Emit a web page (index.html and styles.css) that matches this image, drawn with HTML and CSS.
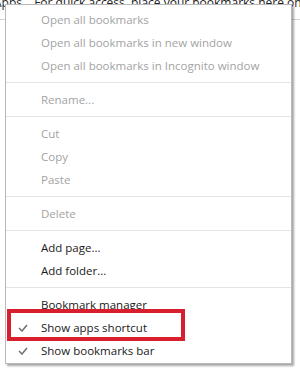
FILE: index.html
```html
<!DOCTYPE html>
<html lang="en">
<head>
    <meta charset="UTF-8">
    <meta name="viewport" content="width=device-width, initial-scale=1.0">
    <title>Bookmarks bar menu</title>
    <link rel="stylesheet" href="styles.css">
</head>
<body>
    <div class="bookmarks-bar">
        <span class="apps">Apps</span>
        <span class="hint">For quick access, place your bookmarks here on the bookmarks bar.</span>
    </div>
    <div class="context-menu">
        <div class="item disabled">Open all bookmarks</div>
        <div class="item disabled">Open all bookmarks in new window</div>
        <div class="item disabled">Open all bookmarks in Incognito window</div>
        <div class="separator"></div>
        <div class="item disabled">Rename...</div>
        <div class="separator"></div>
        <div class="item disabled">Cut</div>
        <div class="item disabled">Copy</div>
        <div class="item disabled">Paste</div>
        <div class="separator"></div>
        <div class="item disabled">Delete</div>
        <div class="separator"></div>
        <div class="item">Add page...</div>
        <div class="item">Add folder...</div>
        <div class="separator"></div>
        <div class="item">Bookmark manager</div>
        <div class="item checked highlight">
            <svg class="check" width="10" height="8" viewBox="0 0 10 8"><polyline points="1,4 4,7 9,1" fill="none" stroke="#707070" stroke-width="1.5"/></svg>
            Show apps shortcut
        </div>
        <div class="item checked">
            <svg class="check" width="10" height="8" viewBox="0 0 10 8"><polyline points="1,4 4,7 9,1" fill="none" stroke="#707070" stroke-width="1.5"/></svg>
            Show bookmarks bar
        </div>
    </div>
</body>
</html>
```

FILE: styles.css
```css
body {
    margin: 0;
    background: #fff;
    font-family: "Open Sans", "Noto Sans", Arial, sans-serif;
    font-size: 12px;
    overflow: hidden;
}
.bookmarks-bar {
    height: 14px;
    margin-top: -4px;
    padding-bottom: 9px;
    line-height: 14px;
    border-bottom: 1px solid #d4d4d4;
    color: #222;
    white-space: nowrap;
    overflow: hidden;
}
.apps {
    margin-left: -6px;
}
.hint {
    margin-left: 9px;
}
.context-menu {
    position: absolute;
    left: 5px;
    top: 4px;
    width: 285px;
    padding: 3px 0 1px;
    background: #fff;
    border: 1px solid #b9b9b9;
    box-shadow: 2px 2px 2px rgba(0, 0, 0, 0.35);
}
.item {
    position: relative;
    display: flex;
    align-items: center;
    height: 23px;
    padding-left: 35px;
    font-size: 11.5px;
    color: #1a1a1a;
    white-space: nowrap;
}
.item.disabled {
    color: #a3a3a3;
}
.item.checked .check {
    position: absolute;
    left: 12px;
    top: 8px;
}
.separator {
    height: 1px;
    margin: 5px 0;
    background: #e4e4e4;
}
.highlight::after {
    content: "";
    position: absolute;
    left: 1px;
    top: -7px;
    width: 170px;
    height: 24px;
    border: 4px solid #d71f2d;
}
```
